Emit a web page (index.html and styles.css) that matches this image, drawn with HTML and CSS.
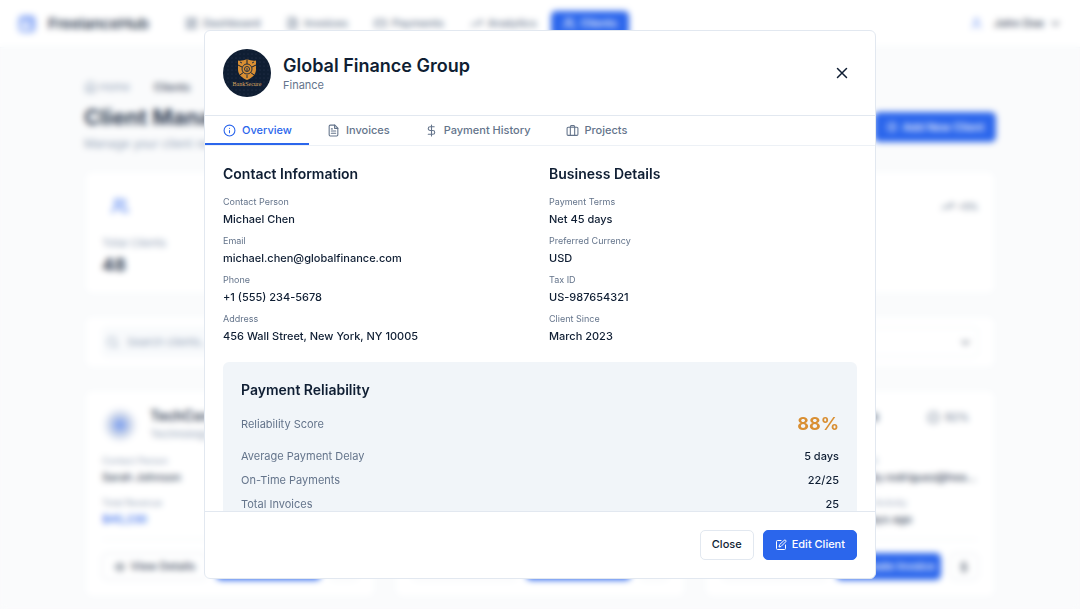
FILE: index.html
```
<!DOCTYPE html>
<html lang="en">
  <head>
    <meta charset="UTF-8" />
    <meta name="viewport" content="width=device-width, initial-scale=1.0" />
    <title>FreelanceHub - Clients</title>
    <link rel="stylesheet" href="styles.css" />
  </head>
  <body>
    <svg class="sprite" aria-hidden="true">
      <symbol id="i-grid" viewBox="0 0 24 24"><rect x="3" y="3" width="7" height="9" rx="1" /><rect x="14" y="3" width="7" height="5" rx="1" /><rect x="14" y="12" width="7" height="9" rx="1" /><rect x="3" y="16" width="7" height="5" rx="1" /></symbol>
      <symbol id="i-file" viewBox="0 0 24 24"><path d="M14.500 2H6a2 2 0 0 0-2 2v16a2 2 0 0 0 2 2h12a2 2 0 0 0 2-2V7.500Z" /><path d="M14 2v6h6M16 13H8M16 17H8M10 9H8" /></symbol>
      <symbol id="i-card" viewBox="0 0 24 24"><rect x="2" y="5" width="20" height="14" rx="2" /><path d="M2 10h20" /></symbol>
      <symbol id="i-trend" viewBox="0 0 24 24"><path d="m22 7-8.500 8.500-5-5L2 17" /><path d="M16 7h6v6" /></symbol>
      <symbol id="i-users" viewBox="0 0 24 24"><path d="M16 21v-2a4 4 0 0 0-4-4H6a4 4 0 0 0-4 4v2" /><circle cx="9" cy="7" r="4" /><path d="M22 21v-2a4 4 0 0 0-3-3.870M16 3.130a4 4 0 0 1 0 7.750" /></symbol>
      <symbol id="i-user" viewBox="0 0 24 24"><path d="M19 21v-2a4 4 0 0 0-4-4H9a4 4 0 0 0-4 4v2" /><circle cx="12" cy="7" r="4" /></symbol>
      <symbol id="i-down" viewBox="0 0 24 24"><path d="m6 9 6 6 6-6" /></symbol>
      <symbol id="i-home" viewBox="0 0 24 24"><path d="m3 9 9-7 9 7v11a2 2 0 0 1-2 2H5a2 2 0 0 1-2-2z" /><path d="M9 22V12h6v10" /></symbol>
      <symbol id="i-plus" viewBox="0 0 24 24"><circle cx="12" cy="12" r="9" /><path d="M12 8v8M8 12h8" /></symbol>
      <symbol id="i-search" viewBox="0 0 24 24"><circle cx="11" cy="11" r="8" /><path d="m21 21-4.300-4.300" /></symbol>
      <symbol id="i-eye" viewBox="0 0 24 24"><path d="M2 12s3-7 10-7 10 7 10 7-3 7-10 7-10-7-10-7Z" /><circle cx="12" cy="12" r="3" /></symbol>
      <symbol id="i-check" viewBox="0 0 24 24"><circle cx="12" cy="12" r="10" /><path d="m9 12 2 2 4-4" /></symbol>
      <symbol id="i-dollar" viewBox="0 0 24 24"><path d="M12 2v20M17 5H9.500a3.500 3.500 0 0 0 0 7h5a3.500 3.500 0 0 1 0 7H6" /></symbol>
      <symbol id="i-info" viewBox="0 0 24 24"><circle cx="12" cy="12" r="10" /><path d="M12 16v-4M12 8h.01" /></symbol>
      <symbol id="i-case" viewBox="0 0 24 24"><rect x="2" y="6" width="20" height="15" rx="2" /><path d="M8 21V5a2 2 0 0 1 2-2h4a2 2 0 0 1 2 2v16" /></symbol>
      <symbol id="i-close" viewBox="0 0 24 24"><path d="M18 6 6 18M6 6l12 12" /></symbol>
      <symbol id="i-edit" viewBox="0 0 24 24"><path d="M12 3H5a2 2 0 0 0-2 2v14a2 2 0 0 0 2 2h14a2 2 0 0 0 2-2v-7" /><path d="M18.400 2.600a2.100 2.100 0 0 1 3 3L12 15l-4 1 1-4Z" /></symbol>
    </svg>

    <div class="page">
      <header class="topbar">
        <a class="brand" href="#">
          <svg class="brand-logo" viewBox="0 0 18 18"><rect width="18" height="18" rx="5" fill="#a5bdf8" /><path d="M3 15V9l5-4 4 3v7" fill="#dbe5fd" /><path d="M6 4h8v6" fill="none" stroke="#86a6f5" stroke-width="2" /></svg>
          <span>FreelanceHub</span>
        </a>
        <nav class="nav">
          <a href="#"><svg class="icon"><use href="#i-grid" /></svg>Dashboard</a>
          <a href="#"><svg class="icon"><use href="#i-file" /></svg>Invoices</a>
          <a href="#"><svg class="icon"><use href="#i-card" /></svg>Payments</a>
          <a href="#"><svg class="icon"><use href="#i-trend" /></svg>Analytics</a>
          <a class="current" href="#"><svg class="icon"><use href="#i-users" /></svg>Clients</a>
        </nav>
        <button class="account" type="button">
          <svg class="icon account-icon"><use href="#i-user" /></svg>
          John Doe
          <svg class="icon"><use href="#i-down" /></svg>
        </button>
      </header>

      <main class="content">
        <nav class="crumbs">
          <a href="#"><svg class="icon"><use href="#i-home" /></svg>Home</a>
          <b>Clients</b>
        </nav>
        <div class="title-row">
          <div>
            <h1>Client Management</h1>
            <p>Manage your client relationships</p>
          </div>
          <button class="btn btn-primary" type="button"><svg class="icon"><use href="#i-plus" /></svg>Add New Client</button>
        </div>

        <section class="stats">
          <div class="card">
            <div class="stat-top"><svg class="icon stat-icon"><use href="#i-users" /></svg></div>
            <p>Total Clients</p>
            <strong>48</strong>
          </div>
          <div class="card"></div>
          <div class="card"></div>
          <div class="card">
            <div class="stat-top stat-top-end"><svg class="icon"><use href="#i-trend" /></svg>+5%</div>
          </div>
        </section>

        <form class="card filters">
          <label class="search"><svg class="icon"><use href="#i-search" /></svg><input type="search" placeholder="Search clients..." aria-label="Search clients" /></label>
          <label class="pick">
            <select aria-label="Status"><option>All Clients</option></select>
            <svg class="icon"><use href="#i-down" /></svg>
          </label>
        </form>

        <section class="clients">
          <article class="card">
            <div class="client-head">
              <span class="client-logo"></span>
              <div><h2>TechCorp</h2><p>Technology</p></div>
            </div>
            <dl class="facts">
              <div><dt>Contact Person</dt><dd>Sarah Johnson</dd></div>
              <div></div>
              <div><dt>Total Revenue</dt><dd class="money">$45,230</dd></div>
            </dl>
            <div class="client-actions">
              <button class="btn" type="button"><svg class="icon"><use href="#i-eye" /></svg>View Details</button>
              <button class="btn btn-primary" type="button" aria-label="Create Invoice"><svg class="icon"><use href="#i-file" /></svg></button>
              <button class="btn btn-small" type="button" aria-label="Payments"><svg class="icon"><use href="#i-dollar" /></svg></button>
            </div>
          </article>
          <article class="card">
            <div class="client-actions">
              <button class="btn" type="button" aria-label="View Details"><svg class="icon"><use href="#i-eye" /></svg></button>
              <button class="btn btn-primary" type="button" aria-label="Create Invoice"><svg class="icon"><use href="#i-file" /></svg></button>
              <button class="btn btn-small" type="button" aria-label="Payments"><svg class="icon"><use href="#i-dollar" /></svg></button>
            </div>
          </article>
          <article class="card">
            <div class="client-head">
              <span class="client-logo"></span>
              <div><h2>HealthCare Plus</h2></div>
              <span class="score"><svg class="icon"><use href="#i-check" /></svg>92%</span>
            </div>
            <dl class="facts">
              <div></div>
              <div><dt>Email</dt><dd>emily.rodriguez@healthcareplus.com</dd></div>
              <div></div>
              <div><dt>Last Activity</dt><dd>5 days ago</dd></div>
            </dl>
            <div class="client-actions">
              <button class="btn" type="button" aria-label="View Details"><svg class="icon"><use href="#i-eye" /></svg></button>
              <button class="btn btn-primary" type="button"><svg class="icon"><use href="#i-file" /></svg>Create Invoice</button>
              <button class="btn btn-small" type="button" aria-label="Payments"><svg class="icon"><use href="#i-dollar" /></svg></button>
            </div>
          </article>
        </section>
      </main>
    </div>

    <div class="overlay">
      <div class="modal" role="dialog" aria-modal="true" aria-labelledby="modalTitle">
        <div class="modal-header">
          <svg class="avatar" viewBox="0 0 48 48" role="img" aria-label="BankSecure">
            <defs>
              <pattern id="dots" width="4" height="4" patternUnits="userSpaceOnUse"><circle cx="1" cy="1" r="0.400" fill="#41506a" /></pattern>
            </defs>
            <circle cx="24" cy="24" r="24" fill="#0f1e33" />
            <circle cx="24" cy="24" r="23" fill="url(#dots)" />
            <path d="M24 10c3 1.500 6 2 9 1.500v9c0 5-4 8.500-9 10.500-5-2-9-5.500-9-10.500v-9c3 .5 6 0 9-1.500Z" fill="#d98f33" />
            <path d="M24 10v5M15 16l4 2M33 16l-4 2M17 26l4-3M31 26l-4-3" stroke="#0f1e33" stroke-width="1" />
            <circle cx="24" cy="20" r="5" fill="#d98f33" stroke="#24303f" stroke-width="1" />
            <circle cx="24" cy="20" r="2.500" fill="none" stroke="#24303f" stroke-width="1" />
            <path d="M24 19v3M19 14l-2-1M29 14l2-1M24 26v3" stroke="#24303f" stroke-width="1" />
            <text x="24" y="37" class="avatar-text">BankSecure</text>
          </svg>
          <div class="modal-name">
            <h2 id="modalTitle">Global Finance Group</h2>
            <p>Finance</p>
          </div>
          <button class="close" type="button" aria-label="Close dialog"><svg class="icon"><use href="#i-close" /></svg></button>
        </div>

        <div class="tabs" role="tablist">
          <button class="tab active" type="button" role="tab" aria-selected="true"><svg class="icon"><use href="#i-info" /></svg>Overview</button>
          <button class="tab" type="button" role="tab"><svg class="icon"><use href="#i-file" /></svg>Invoices</button>
          <button class="tab" type="button" role="tab"><svg class="icon"><use href="#i-dollar" /></svg>Payment History</button>
          <button class="tab" type="button" role="tab"><svg class="icon"><use href="#i-case" /></svg>Projects</button>
        </div>

        <div class="modal-body">
          <div class="columns">
            <section>
              <h3>Contact Information</h3>
              <dl class="details">
                <div><dt>Contact Person</dt><dd>Michael Chen</dd></div>
                <div><dt>Email</dt><dd>michael.chen@globalfinance.com</dd></div>
                <div><dt>Phone</dt><dd>+1 (555) 234-5678</dd></div>
                <div><dt>Address</dt><dd>456 Wall Street, New York, NY 10005</dd></div>
              </dl>
            </section>
            <section>
              <h3>Business Details</h3>
              <dl class="details">
                <div><dt>Payment Terms</dt><dd>Net 45 days</dd></div>
                <div><dt>Preferred Currency</dt><dd>USD</dd></div>
                <div><dt>Tax ID</dt><dd>US-987654321</dd></div>
                <div><dt>Client Since</dt><dd>March 2023</dd></div>
              </dl>
            </section>
          </div>

          <section class="reliability">
            <h3>Payment Reliability</h3>
            <dl>
              <div class="score-row"><dt>Reliability Score</dt><dd>88%</dd></div>
              <div><dt>Average Payment Delay</dt><dd>5 days</dd></div>
              <div><dt>On-Time Payments</dt><dd>22/25</dd></div>
              <div><dt>Total Invoices</dt><dd>25</dd></div>
            </dl>
          </section>
        </div>

        <div class="modal-footer">
          <button class="btn" type="button">Close</button>
          <button class="btn btn-primary" type="button"><svg class="icon"><use href="#i-edit" /></svg>Edit Client</button>
        </div>
      </div>
    </div>
  </body>
</html>
```
FILE: styles.css
```
* {
  box-sizing: border-box;
}
body {
  margin: 0;
  height: 100vh;
  overflow: hidden;
  background-color: #fafbfc;
  color: #0f1e33;
  font-family: Inter, "Liberation Sans", sans-serif;
  font-size: 11px;
  line-height: 15px;
}
h1,
h2,
h3,
p,
dl,
dd {
  margin: 0;
}
h3 {
  font-size: 14px;
  line-height: 20px;
  font-weight: 600;
  margin-bottom: 12px;
}
a {
  color: inherit;
  text-decoration: none;
}
button,
input,
select {
  font: inherit;
  color: inherit;
}
button {
  cursor: pointer;
}
.sprite {
  display: none;
}
.icon {
  width: 13px;
  height: 13px;
  flex: none;
  fill: none;
  stroke: currentColor;
  stroke-width: 2;
  stroke-linecap: round;
  stroke-linejoin: round;
}
.btn {
  display: flex;
  align-items: center;
  justify-content: center;
  gap: 5px;
  height: 30px;
  padding: 0 11px;
  border: 1px solid #e2e8f0;
  border-radius: 5px;
  background-color: #fff;
  font-weight: 500;
  white-space: nowrap;
}
.btn .icon {
  width: 12px;
  height: 12px;
}
.btn-primary {
  border-color: #2b66ec;
  background-color: #2b66ec;
  color: #fff;
}

/* page behind the dialog */
.page {
  color: #334155;
}
.topbar {
  display: flex;
  align-items: center;
  height: 48px;
  padding: 0 18px;
  background-color: #fff;
  border-bottom: 1px solid #f1f5f9;
}
.brand {
  display: flex;
  align-items: center;
  gap: 12px;
  margin-right: 24px;
  font-size: 15px;
  font-weight: 600;
}
.brand-logo {
  width: 18px;
  height: 18px;
}
.nav {
  display: flex;
  gap: 2px;
  color: #64748b;
  font-weight: 500;
}
.nav a {
  display: flex;
  align-items: center;
  gap: 5px;
  height: 26px;
  padding: 0 12px;
  border-radius: 5px;
}
.nav .current {
  background-color: #2b66ec;
  color: #fff;
}
.account {
  display: flex;
  align-items: center;
  gap: 5px;
  margin-left: auto;
  padding: 0;
  border: 0;
  background: none;
  font-weight: 500;
}
.account-icon {
  margin-right: 6px;
  color: #7ea0f4;
}
.content {
  max-width: 948px;
  margin: 0 auto;
  padding: 32px 18px;
}
.crumbs {
  display: flex;
  gap: 24px;
  color: #94a3b8;
}
.crumbs a {
  display: flex;
  gap: 2px;
}
.crumbs b {
  color: #334155;
  font-weight: 500;
}
.title-row {
  display: flex;
  align-items: center;
  justify-content: space-between;
  margin: 7px 0 18px;
}
.title-row h1 {
  font-size: 22px;
  line-height: 30px;
}
.title-row p {
  margin-top: 4px;
  font-size: 12px;
  line-height: 16px;
  color: #94a3b8;
}
.card {
  min-width: 0;
  padding: 17px;
  border: 1px solid #f1f5f9;
  border-radius: 8px;
  background-color: #fff;
}
.stats {
  display: grid;
  grid-template-columns: repeat(4, 1fr);
  gap: 18px;
}
.stats .card {
  height: 125px;
}
.stats p {
  margin: 12px 0 4px;
  color: #94a3b8;
}
.stats strong {
  font-size: 18px;
  line-height: 20px;
}
.stat-top {
  display: flex;
  align-items: center;
  gap: 3px;
  height: 36px;
  padding-left: 9px;
  font-size: 9px;
  font-weight: 500;
  color: #64748b;
}
.stat-top-end {
  justify-content: flex-end;
}
.stat-icon {
  width: 18px;
  height: 18px;
  color: #4f7ff0;
}
.filters {
  display: flex;
  gap: 12px;
  margin: 20px 0;
  padding: 11px 17px;
}
.search {
  display: flex;
  align-items: center;
  gap: 6px;
  flex: 1;
  height: 30px;
  padding: 0 4px;
  border-radius: 5px;
  background-color: #f8fafc;
  color: #94a3b8;
}
.search input {
  flex: 1;
  border: 0;
  background: none;
}
.search input::placeholder {
  color: #94a3b8;
}
.pick {
  display: flex;
  align-items: center;
  width: 200px;
  padding: 0 5px;
  border: 1px solid #f1f5f9;
  border-radius: 5px;
}
.pick select {
  flex: 1;
  appearance: none;
  border: 0;
  background: none;
}
.clients {
  display: grid;
  grid-template-columns: repeat(3, 1fr);
  gap: 18px;
}
.clients .card {
  display: flex;
  flex-direction: column;
}
.client-head {
  display: flex;
  gap: 12px;
  height: 36px;
  margin-bottom: 12px;
}
.client-head h2 {
  font-size: 14px;
  line-height: 18px;
  font-weight: 600;
  white-space: nowrap;
}
.client-head p {
  line-height: 18px;
  color: #94a3b8;
}
.client-logo {
  width: 36px;
  height: 36px;
  flex: none;
  border-radius: 50%;
  background: radial-gradient(circle, #7096ee 0%, #ccd6ea 40%, #fff 70%);
}
.score {
  display: flex;
  align-items: center;
  gap: 5px;
  height: 20px;
  margin-left: auto;
  padding-right: 9px;
  color: #64748b;
}
.facts {
  display: grid;
  grid-template-columns: 1fr 1fr;
  gap: 12px 9px;
}
.facts div {
  min-width: 0;
}
.facts dt {
  margin-bottom: 3px;
  font-size: 9px;
  line-height: 12px;
  color: #94a3b8;
}
.facts dd {
  overflow: hidden;
  text-overflow: ellipsis;
  white-space: nowrap;
  font-weight: 500;
}
.facts .money {
  color: #2b66ec;
}
.client-actions {
  display: flex;
  gap: 9px;
  margin-top: auto;
  padding-top: 13px;
  border-top: 1px solid #f1f5f9;
}
.facts + .client-actions {
  margin-top: 12px;
}
.client-actions .btn {
  flex: 1;
  height: 27px;
  padding: 0;
}
.client-actions .btn-small {
  flex: 0 0 28px;
}

/* dialog */
.overlay {
  position: fixed;
  inset: 0;
  display: flex;
  align-items: center;
  justify-content: center;
  padding: 18px;
  backdrop-filter: blur(3px);
}
.modal {
  display: flex;
  flex-direction: column;
  width: 100%;
  max-width: 672px;
  max-height: 90vh;
  overflow: hidden;
  border: 1px solid #e2e8f0;
  border-radius: 6px;
  background-color: #fff;
}
.modal-header {
  display: flex;
  gap: 12px;
  padding: 18px;
  border-bottom: 1px solid #e2e8f0;
}
.avatar {
  width: 48px;
  height: 48px;
}
.avatar-text {
  fill: #d9a662;
  font-family: "Liberation Serif", serif;
  font-size: 6px;
  text-anchor: middle;
}
.modal-name {
  flex: 1;
}
.modal-name h2 {
  margin-top: 5px;
  font-size: 18px;
  line-height: 24px;
  font-weight: 600;
}
.modal-name p {
  color: #64748b;
}
.close {
  display: flex;
  align-items: center;
  justify-content: center;
  align-self: center;
  width: 30px;
  height: 30px;
  padding: 0;
  border: 0;
  background: none;
}
.close .icon {
  width: 18px;
  height: 18px;
}
.tabs {
  display: flex;
  flex: none;
  border-bottom: 1px solid #edf1f6;
}
.tab {
  display: flex;
  align-items: center;
  gap: 6px;
  height: 29px;
  padding: 2px 17px 0 18px;
  border: 0;
  border-bottom: 2px solid transparent;
  background: none;
  color: #64748b;
  font-weight: 500;
}
.tab.active {
  border-color: #2b66ec;
  color: #2b66ec;
}
.modal-body {
  flex: 1;
  min-height: 0;
  padding: 18px;
  overflow-y: auto;
  scrollbar-width: none;
}
.columns {
  display: grid;
  grid-template-columns: 1fr 1fr;
  gap: 18px;
  margin-bottom: 18px;
}
.details {
  display: grid;
  gap: 8px;
}
.details dt {
  margin-bottom: 3px;
  font-size: 9px;
  line-height: 12px;
  color: #64748b;
}
.details dd {
  line-height: 16px;
  font-weight: 500;
}
.reliability {
  padding: 18px;
  border-radius: 6px;
  background-color: #f1f5f9;
}
.reliability dl {
  display: grid;
  gap: 9px;
}
.reliability dl div {
  display: flex;
  align-items: center;
  justify-content: space-between;
}
.reliability dt {
  color: #64748b;
}
.reliability dd {
  font-weight: 500;
}
.reliability .score-row {
  margin-bottom: 4px;
}
.reliability .score-row dd {
  font-size: 18px;
  line-height: 24px;
  font-weight: 700;
  color: #d98f33;
}
.modal-footer {
  display: flex;
  justify-content: flex-end;
  gap: 9px;
  padding: 18px;
  border-top: 1px solid #e2e8f0;
}
```
